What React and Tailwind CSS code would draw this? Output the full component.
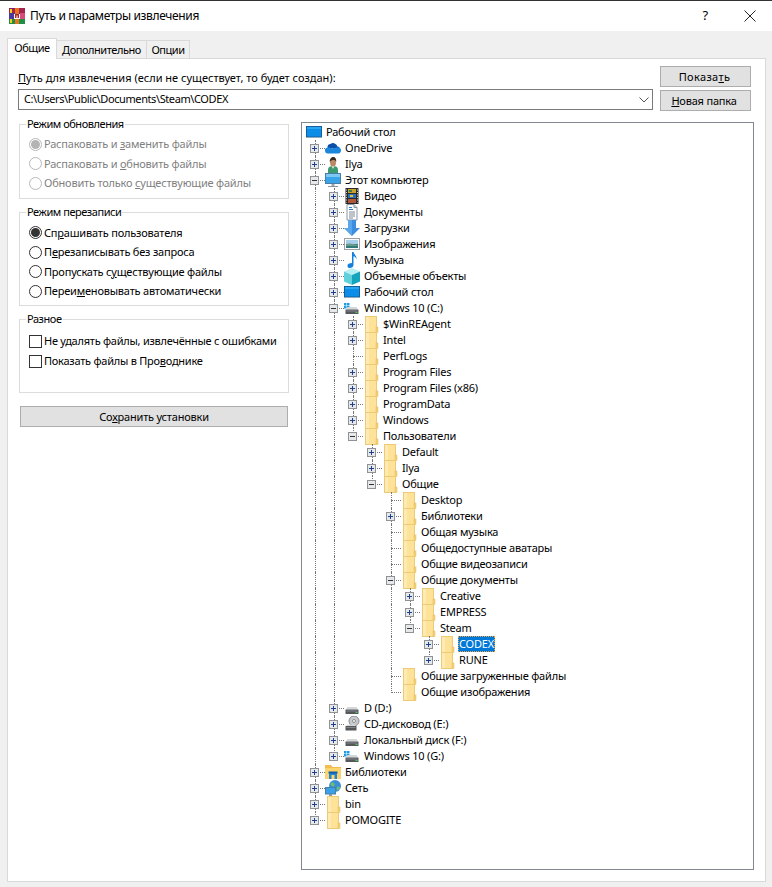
import React from "react";

function WinRarIcon() {
  return (
    <svg width="16" height="16" viewBox="0 0 16 16" className="shrink-0">
      <rect x="0" y="0" width="16" height="5" fill="#a8224f" />
      <rect x="0" y="5" width="16" height="6" fill="#4a3a9c" />
      <rect x="0" y="11" width="16" height="5" fill="#1f8f48" />
      <rect x="0" y="0" width="5" height="1" fill="#7a1f6c" />
      <rect x="1" y="1" width="2" height="4" fill="#f4d21f" />
      <rect x="1" y="11" width="2" height="4" fill="#f4d21f" />
      <rect x="6" y="0" width="4" height="16" fill="#e8751a" />
      <rect x="5" y="6" width="6" height="5" fill="#fff" />
      <path d="M6 6v4h1V7.5h.5V10h1V7.5H9V10h1V6z" fill="#b3262c" />
      <rect x="11" y="5" width="5" height="6" fill="#d84a7a" />
    </svg>
  );
}

function DesktopIcon() {
  return (
    <svg width="16" height="16" viewBox="0 0 16 16">
      <rect x="0.5" y="2.5" width="15" height="10.5" fill="#0c8ee8" stroke="#14609c" />
      <rect x="1" y="3" width="14" height="2" fill="#2aa6f2" />
      <rect x="0" y="13" width="16" height="1" fill="#8fa9bd" />
    </svg>
  );
}

function CloudIcon() {
  return (
    <svg width="16" height="16" viewBox="0 0 16 16">
      <path d="M2.500 7.500A3 3 0 0 1 5.500 4 4.500 4.500 0 0 1 12.500 6.500 3 3 0 0 1 15 8.500H4z" fill="#0c4fa8" />
      <path d="M3.400 13.500A2.800 2.800 0 0 1 2.500 7.600c2-.6 3 .4 4.500 1l4.500-1.200c2-.4 4.300.4 4.500 2.600.1 1.500-.8 3.500-2.600 3.500z" fill="#1a86dc" />
    </svg>
  );
}

function UserIcon() {
  return (
    <svg width="16" height="17" viewBox="0 0 16 17">
      <path d="M3 17v-3.500C3 11 5 10 8 10s5 1 5 3.500V17z" fill="#3d9a6e" />
      <path d="M6.500 10l1.500 3 1.500-3z" fill="#e8f0e8" />
      <ellipse cx="8" cy="6.500" rx="3" ry="4" fill="#b88a64" />
      <path d="M4.800 6C4.500 2.500 6.500 1 8.300 1c2.200 0 3.200 2 2.900 5-.5-1.500-1.500-2-3-2-1.300 0-2.200.5-3.400 2z" fill="#3a2a22" />
    </svg>
  );
}

function MonitorIcon() {
  return (
    <svg width="16" height="16" viewBox="0 0 16 16">
      <rect x="0.500" y="1.500" width="15" height="10" fill="#39a5e8" stroke="#4a7ea6" />
      <rect x="1" y="2" width="14" height="3" fill="#7cc8f2" />
      <rect x="6.500" y="12" width="3" height="2" fill="#9aa4ac" />
      <rect x="3" y="14" width="10" height="1" fill="#8a959e" />
    </svg>
  );
}

function FilmIcon() {
  return (
    <svg width="16" height="17" viewBox="0 0 16 17">
      <rect x="1.500" y="0" width="13" height="16" fill="#2a2a2a" />
      <rect x="4" y="1" width="8" height="4" fill="#c9a22e" />
      <rect x="4" y="6" width="8" height="4" fill="#2d6fb5" />
      <rect x="4" y="11" width="8" height="4" fill="#b0563a" />
      <rect x="6" y="7" width="3" height="2" fill="#e0c040" />
      <rect x="5" y="2" width="3" height="2" fill="#3a7f4a" />
      <path d="M2.500 1.500v13M13.500 1.500v13" stroke="#d8d8d8" strokeDasharray="1 1.500" />
    </svg>
  );
}

function DocIcon() {
  return (
    <svg width="16" height="17" viewBox="0 0 16 17">
      <path d="M3 0.500h7l3 3v12.500H3z" fill="#fdfdfd" stroke="#8a98a6" />
      <path d="M10 .5v3h3" fill="#cfd8e0" stroke="#8a98a6" />
      <path d="M5 3.500h3M5 5.500h4" stroke="#2a7fd0" />
      <path d="M5 8h6M5 10h6M5 12h6M5 14h4" stroke="#7f8a96" />
    </svg>
  );
}

function DownIcon() {
  return (
    <svg width="16" height="16" viewBox="0 0 16 16">
      <path d="M4 -1h8v9h4l-8 8-8-8h4z" fill="#3d8ede" />
      <path d="M4 -1h4v17l-8-8h4z" fill="#5aa6ea" />
    </svg>
  );
}

function ImageIcon() {
  return (
    <svg width="16" height="16" viewBox="0 0 16 16">
      <rect x="0.500" y="2.500" width="15" height="11" fill="#fafafa" stroke="#9aa0a6" />
      <rect x="2" y="4" width="12" height="4" fill="#a8cde8" />
      <rect x="2" y="8" width="12" height="4" fill="#2f7a78" />
      <path d="M2 8.500c3-2 6-1 12 .5v1H2z" fill="#6b9a8c" />
    </svg>
  );
}

function MusicIcon() {
  return (
    <svg width="16" height="16" viewBox="0 0 16 16">
      <path d="M8 0h1.500c.3 2.500 3.500 3.500 3 7.500-.4-2-1.800-3-3-3.200V13c0 1.800-1.800 3-3.800 3S3.500 15 3.500 13.500 5.300 11 8 11z" fill="#1380dd" />
    </svg>
  );
}

function CubeIcon() {
  return (
    <svg width="16" height="17" viewBox="0 0 16 17">
      <path d="M8 0l8 3.500-8 3.500-8-3.500z" fill="#b5f0f2" />
      <path d="M0 3.500l8 3.500v10l-8-3.500z" fill="#5fd0dc" />
      <path d="M16 3.500l-8 3.500v10l8-3.500z" fill="#12a5bd" />
    </svg>
  );
}

function DriveIcon({ win }) {
  return (
    <svg width="16" height="16" viewBox="0 0 16 16">
      {win && (
        <g fill="#1e9ae8">
          <rect x="0" y="3" width="2.500" height="2.500" />
          <rect x="3" y="3" width="2.500" height="2.500" />
          <rect x="0" y="6" width="2.500" height="2.500" />
          <rect x="3" y="6" width="2.500" height="2.500" />
        </g>
      )}
      <path d="M2 9.500l1.500-2.500h9L14 9.500z" fill="#d4d6d8" />
      <rect x="1.500" y="9.500" width="13" height="4.500" rx="0.500" fill="#55595c" />
      <rect x="2.500" y="10.500" width="11" height="1" fill="#82868a" />
      <rect x="11.500" y="12" width="2" height="1" fill="#4ad04a" />
    </svg>
  );
}

function CdIcon() {
  return (
    <svg width="16" height="16" viewBox="0 0 16 16">
      <circle cx="10" cy="5" r="5" fill="#c8cacc" stroke="#8a8d90" />
      <circle cx="10" cy="5" r="1.500" fill="#fff" stroke="#8a8d90" />
      <path d="M2 10l1.500-1.500h7L12 10z" fill="#d4d6d8" />
      <rect x="1.500" y="10" width="11" height="4.500" rx="0.500" fill="#55595c" />
      <rect x="2.500" y="11" width="9" height="1" fill="#82868a" />
    </svg>
  );
}

function LibraryIcon() {
  return (
    <svg width="16" height="16" viewBox="0 0 16 16">
      <path d="M0 1h6l1.500 2H16v12H0z" fill="#f2bd4e" />
      <rect x="0" y="4" width="16" height="11" fill="#fbd46e" />
      <rect x="4" y="8" width="8" height="7" fill="#1f86d8" />
      <rect x="6.500" y="11" width="3" height="4" fill="#fbd46e" />
      <rect x="3.500" y="7.500" width="9" height="2" fill="#125fa8" />
    </svg>
  );
}

function NetworkIcon() {
  return (
    <svg width="16" height="17" viewBox="0 0 16 17">
      <circle cx="10" cy="6" r="6" fill="#3d8fd4" />
      <path d="M6 3c2-1 3 0 3.500 1.500S8 7 7 6 5 5 6 3zM12 7c1.500-.5 3 0 3 1l-2 2.500c-1 0-1.500-2-1-3.500z" fill="#6fc06a" />
      <rect x="0.500" y="7.500" width="10" height="6.500" fill="#3aa0e8" stroke="#4a7ea6" />
      <rect x="4" y="14" width="3" height="2" fill="#8a959e" />
      <rect x="2" y="16" width="7" height="1" fill="#8a959e" />
    </svg>
  );
}

function FolderIcon() {
  return (
    <svg width="16" height="17" viewBox="0 0 16 17">
      <rect x="2.500" y="0.500" width="11" height="16" fill="#fde298" stroke="#eccb74" />
      <rect x="3" y="1" width="3" height="15" fill="#fdeab4" />
      <rect x="13" y="11" width="2" height="5.500" fill="#f4cf74" stroke="#e4bd60" strokeWidth="0.500" />
    </svg>
  );
}

const icons = {
  desktop: <DesktopIcon />,
  cloud: <CloudIcon />,
  user: <UserIcon />,
  monitor: <MonitorIcon />,
  film: <FilmIcon />,
  doc: <DocIcon />,
  down: <DownIcon />,
  image: <ImageIcon />,
  music: <MusicIcon />,
  cube: <CubeIcon />,
  winDrive: <DriveIcon win />,
  drive: <DriveIcon />,
  cd: <CdIcon />,
  library: <LibraryIcon />,
  network: <NetworkIcon />,
  folder: <FolderIcon />,
};

// open = minus box, closed = plus box, leaf = just the dotted line
const f = (name, state = "closed", children) => ({ name, icon: "folder", state, children });
const n = (name, icon, state = "closed", children) => ({ name, icon, state, children });

const tree = n("Рабочий стол", "desktop", "root", [
  n("OneDrive", "cloud"),
  n("Ilya", "user"),
  n("Этот компьютер", "monitor", "open", [
    n("Видео", "film"),
    n("Документы", "doc"),
    n("Загрузки", "down"),
    n("Изображения", "image"),
    n("Музыка", "music"),
    n("Объемные объекты", "cube"),
    n("Рабочий стол", "desktop"),
    n("Windows 10 (C:)", "winDrive", "open", [
      f("$WinREAgent"),
      f("Intel"),
      f("PerfLogs", "leaf"),
      f("Program Files"),
      f("Program Files (x86)"),
      f("ProgramData"),
      f("Windows"),
      f("Пользователи", "open", [
        f("Default"),
        f("Ilya"),
        f("Общие", "open", [
          f("Desktop", "leaf"),
          f("Библиотеки"),
          f("Общая музыка", "leaf"),
          f("Общедоступные аватары", "leaf"),
          f("Общие видеозаписи", "leaf"),
          f("Общие документы", "open", [
            f("Creative"),
            f("EMPRESS"),
            f("Steam", "open", [
              { ...f("CODEX"), selected: true },
              f("RUNE"),
            ]),
          ]),
          f("Общие загруженные файлы", "leaf"),
          f("Общие изображения", "leaf"),
        ]),
      ]),
    ]),
    n("D (D:)", "drive"),
    n("CD-дисковод (E:)", "cd"),
    n("Локальный диск (F:)", "drive"),
    n("Windows 10 (G:)", "winDrive"),
  ]),
  n("Библиотеки", "library"),
  n("Сеть", "network"),
  f("bin"),
  f("POMOGITE"),
]);

function Expander({ open }) {
  return (
    <span className="absolute left-[4px] top-[4px] w-[9px] h-[9px] border border-[#8f9296] bg-[#e6e8ea] flex items-center justify-center">
      <span className="relative w-[5px] h-[5px] flex items-center justify-center">
        <span className={`w-[5px] h-px ${open ? "bg-[#333]" : "bg-[#1f3f8f]"}`} />
        {!open && <span className="absolute left-[2px] top-0 w-px h-[5px] bg-[#1f3f8f]" />}
      </span>
    </span>
  );
}

function TreeRows({ node, depth = 0, guides = [], last = true }) {
  return (
    <>
      <div className="flex h-[16px] items-start">
        {guides.map((on, i) => (
          <span key={i} className="relative w-[19px] h-[16px] shrink-0">
            {on && <span className="absolute left-[9px] top-0 h-[16px] border-l border-dotted border-[#777]" />}
          </span>
        ))}
        {depth > 0 && (
          <span className="relative w-[19px] h-[16px] shrink-0">
            <span className={`absolute left-[9px] top-0 border-l border-dotted border-[#777] ${last ? "h-[9px]" : "h-[16px]"}`} />
            <span className="absolute left-[9px] top-[8px] w-[10px] border-t border-dotted border-[#777]" />
            {node.state !== "leaf" && <Expander open={node.state === "open"} />}
          </span>
        )}
        <span className="w-[16px] h-[16px] shrink-0 flex">{icons[node.icon]}</span>
        <span
          className={`ml-[3px] px-px h-[16px] leading-[16px] whitespace-nowrap ${
            node.selected ? "bg-[#0078d7] text-white outline outline-1 outline-dotted outline-offset-[-1px] outline-[#f0a040]" : ""
          }`}
        >
          {node.name}
        </span>
      </div>
      {node.children?.map((c, i) => (
        <TreeRows
          key={c.name + i}
          node={c}
          depth={depth + 1}
          guides={depth > 0 ? [...guides, !last] : guides}
          last={i === node.children.length - 1}
        />
      ))}
    </>
  );
}

function Radio({ checked, disabled, children }) {
  return (
    <div className={`flex items-center h-[19.6px] gap-[2px] ${disabled ? "text-[#7f7f7f]" : ""}`}>
      <span
        className={`w-[13px] h-[13px] rounded-full border flex items-center justify-center shrink-0 ${
          disabled ? "border-[#b8b8b8]" : "border-[#333]"
        }`}
      >
        {checked && <span className={`w-[9px] h-[9px] rounded-full ${disabled ? "bg-[#b4b4b4]" : "bg-[#333]"}`} />}
      </span>
      <span className="whitespace-nowrap">{children}</span>
    </div>
  );
}

function Check({ children }) {
  return (
    <div className="flex items-center h-[20px] gap-[2px]">
      <span className="w-[13px] h-[13px] border border-[#333] bg-white shrink-0" />
      <span className="whitespace-nowrap tracking-[-0.25px]">{children}</span>
    </div>
  );
}

function Group({ title, className, children }) {
  return (
    <fieldset className={`border border-[#dcdcdc] pl-[9px] ${className}`}>
      <legend className="-ml-[3px] px-px h-[14px] leading-[14px] tracking-[-0.45px]">{title}</legend>
      {children}
    </fieldset>
  );
}

function Btn({ className, children }) {
  return (
    <button className={`h-[21px] border border-[#adadad] bg-[#e1e1e1] text-center leading-[19px] ${className}`}>
      {children}
    </button>
  );
}

const U = ({ children }) => <span className="underline">{children}</span>;

export default function App() {
  return (
    <div className="w-[772px] h-[887px] flex flex-col bg-[#f0f0f0] border-t border-t-[#333] overflow-hidden font-['Noto_Sans',sans-serif] text-[11px] tracking-[-0.2px] text-black">
      <div className="h-[30px] shrink-0 bg-white flex items-center pl-[9px]">
        <WinRarIcon />
        <span className="ml-[5px] text-[12px] tracking-[-0.35px]">Путь и параметры извлечения</span>
        <span className="ml-auto mr-[36px] text-[13px]">?</span>
        <svg width="12" height="12" viewBox="0 0 12 12" className="mr-[16px]">
          <path d="M0.500 0.500l11 11M11.500 0.500l-11 11" stroke="#222" />
        </svg>
      </div>

      <div className="h-[27px] shrink-0 flex items-end pl-[7px] tracking-[-0.45px]">
        <div className="h-[21px] w-[50px] -mb-px z-10 bg-white border border-b-0 border-[#d9d9d9] text-center leading-[17px]">Общие</div>
        <div className="h-[18px] w-[90px] bg-[#f0f0f0] border border-l-0 border-b-0 border-[#d9d9d9] text-center leading-[18px]">Дополнительно</div>
        <div className="h-[18px] w-[43px] bg-[#f0f0f0] border border-l-0 border-b-0 border-[#d9d9d9] text-center leading-[18px]">Опции</div>
      </div>

      <div className="mx-[7px] w-[759px] h-[824px] shrink-0 bg-white border border-[#d9d9d9] pl-[10px] pt-[7px]">
        <div className="flex">
          <div className="w-[635px]">
            <div className="h-[23px] pt-[4px] leading-[16px] tracking-normal">
              <U>П</U>уть для извлечения (если не существует, то будет создан):
            </div>
            <div className="h-[21px] border border-[#7a7a7a] flex items-center pl-[5px] pr-[3px]">
              <span className="tracking-[-0.4px]">C:\Users\Public\Documents\Steam\CODEX</span>
              <svg width="10" height="6" viewBox="0 0 10 6" className="ml-auto">
                <path d="M0.500 0.500l4.500 4.500 4.500-4.500" fill="none" stroke="#555" />
              </svg>
            </div>
          </div>
          <div className="w-[91px] ml-[7px] flex flex-col gap-[3px]">
            <Btn className="tracking-[0.35px] pr-[2px]">Показа<U>т</U>ь</Btn>
            <Btn className="pr-[3px]"><U>Н</U>овая папка</Btn>
          </div>
        </div>

        <div className="flex mt-[6px]">
          <div className="w-[270px] ml-px">
            <Group title="Режим обновления" className="h-[82px]">
              <div className="pt-[3.5px]">
                <Radio checked disabled>Распаковать и <U>з</U>аменить файлы</Radio>
                <Radio disabled>Распаковать и <U>о</U>бновить файлы</Radio>
                <Radio disabled>Обновить только <U>с</U>уществующие файлы</Radio>
              </div>
            </Group>
            <Group title="Режим перезаписи" className="h-[101px] mt-[6px]">
              <div className="pt-[4px]">
                <Radio checked>Сп<U>р</U>ашивать пользователя</Radio>
                <Radio>П<U>е</U>резаписывать без запроса</Radio>
                <Radio>Пропускать с<U>у</U>ществующие файлы</Radio>
                <Radio>Переи<U>м</U>еновывать автоматически</Radio>
              </div>
            </Group>
            <Group title="Разное" className="h-[81px] mt-[6px]">
              <div className="pt-[5px]">
                <Check>Не у<U>д</U>алять файлы, извлечённые с ошибками</Check>
                <Check>Показать файлы в Про<U>в</U>однике</Check>
              </div>
            </Group>
            <Btn className="block w-[268px] ml-px mt-[13px]">Со<U>х</U>ранить установки</Btn>
          </div>

          <div className="w-[453px] h-[748px] ml-[12px] mt-[5px] border border-[#828790] pl-[4px] pt-px overflow-hidden">
            <TreeRows node={tree} />
          </div>
        </div>
      </div>
    </div>
  );
}
